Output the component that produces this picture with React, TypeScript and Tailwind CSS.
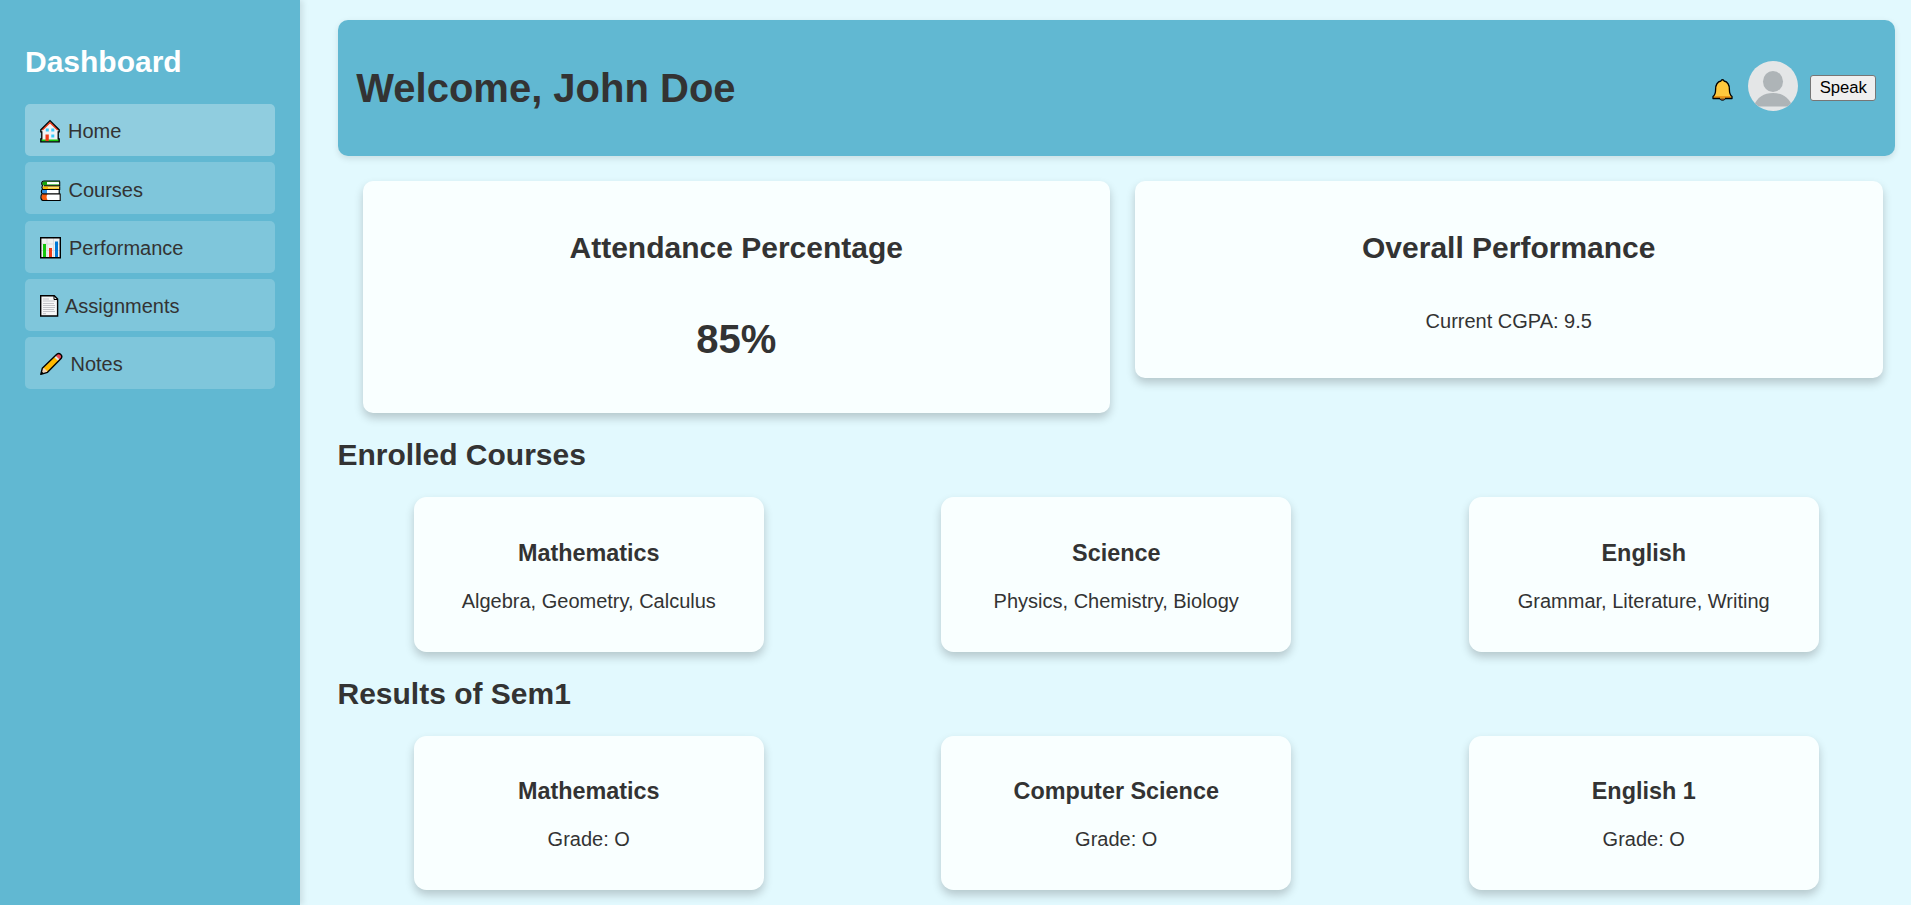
import type { ReactNode } from "react";

const HomeIcon = () => (
  <svg width="22" height="25" viewBox="0 0 22 25" className="mt-[2px] shrink-0">
    <path d="M2 11 10 3l8 8V22H2z" fill="#f2f2f4" />
    <path d="M1 20.500h18v2H1z" fill="#16c60c" />
    <path d="M2.200 11 10 3.500l7.800 7.500" fill="none" stroke="#f03a17" strokeWidth="1.600" />
    <path d="M5.500 15.500h3.300V22H5.500z" fill="#f03a17" />
    <path d="M5.800 9.500h3v3h-3zM11.300 9.500h3v3h-3zM11.300 15.500h3v3h-3z" fill="#3bcdfb" />
    <path d="M.8 22.800v-3h1v-7H.8v-2L10 1.600l9.200 9.200v2h-1v7h1v3z" fill="none" stroke="#000" strokeWidth="1.300" />
  </svg>
);

const BooksIcon = () => (
  <svg width="22" height="24" viewBox="0 0 22 24" className="mt-[5px] shrink-0">
    <path d="M3.500 2H20v5.500H3L1.500 6z" fill="#fff" />
    <path d="M3.500 2.200H19v1H7v2h12v1.300H3.500C1.700 6.500 1.700 3 3.500 2.200z" fill="#16a80c" />
    <path d="M7 3.200h11.500v2H7z" fill="#fff" />
    <path d="M3.500 7.300H20v3H3.500c-1.500-.5-1.500-2.500 0-3z" fill="#fcb900" />
    <path d="M8 8.300h11.500v1H8z" fill="#fff0b0" />
    <path d="M3 10.700h16V15H3L1.500 12z" fill="#fff" />
    <path d="M3 10.800h4v3.700H3c-1.600-.8-1.600-3 0-3.700z" fill="#2f8ee0" />
    <path d="M2.500 15H20.500v6H3L1 19z" fill="#fff" />
    <path d="M3 15h4.500c-1.200 2-1.200 4 0 6H3c-2.400-.5-2.400-5.500 0-6z" fill="#f75b0c" />
    <path d="M20 2H4C1.500 2 1 5 2.500 6.700 1.300 8 2 9.500 2.500 10.300 1 11.500 1 13.500 2.300 14.700.3 16 .3 21 3 21.500h17.200V15H3M4 6.700h15.700V2.500M3 10.500h16.700V7.500M3 14.800h16.200v-4" fill="none" stroke="#000" strokeWidth="1.100" />
  </svg>
);

const ChartIcon = () => (
  <svg width="22" height="24" viewBox="0 0 22 24" className="mt-[3px] shrink-0">
    <path d="M.7 1.700h19.600v20H.7z" fill="#f2f2f2" />
    <path d="M7 2v19M13.500 2v19M1 8h19M1 14.500h19" stroke="#dcdce0" strokeWidth="1" />
    <path d="M3 8h3v13.500H3z" fill="#16c60c" />
    <path d="M9 12h3v9.500H9z" fill="#f03a17" />
    <path d="M15 5.500h3v16h-3z" fill="#0078d7" />
    <path d="M.7 1.700h19.600v20H.7z" fill="none" stroke="#000" strokeWidth="1.400" />
  </svg>
);

const PageIcon = () => (
  <svg width="19" height="24" viewBox="0 0 19 24" className="mt-[2px] shrink-0">
    <path d="M.7 1.700h13.600l3.300 3.300v17H.7z" fill="#f7f7f7" stroke="#000" strokeWidth="1.400" />
    <path d="M14 2v3.500h3.500" fill="none" stroke="#000" strokeWidth="1" />
    <path d="M3 5h6M3 7h12M3 9.500h11M3 11.500h12M3 13.500h12M3 15.500h11M3 17.500h12M3 19.700h3" stroke="#c4c4c8" strokeWidth="1" />
  </svg>
);

const PencilIcon = () => (
  <svg width="24" height="24" viewBox="0 0 24 24" className="mt-[1px] shrink-0">
    <path d="m.8 22.300 1.500-6L16.800 2.200c2.800-2 6.200 1.200 4.500 4L7.500 20.300z" fill="#ffb900" />
    <path d="m.8 22.300 1.500-6 1.200-.7 4 4-.7 1z" fill="#f3d3b5" />
    <path d="m15.500 3.500 4.700 4.500-1.500 1.500L14 5z" fill="#e4e4e6" />
    <path d="m16.800 2.200c2.800-2 6.200 1.200 4.500 4l-1.300 1.500L15.700 3.400z" fill="#e74856" />
    <path d="m.8 22.300.6-3 3 2.500z" fill="#000" />
    <path d="m.8 22.300 1.500-6L16.800 2.200c2.800-2 6.200 1.200 4.500 4L7.500 20.300z" fill="none" stroke="#000" strokeWidth="1.400" strokeLinejoin="round" />
  </svg>
);

const BellIcon = () => (
  <svg width="22" height="24" viewBox="0 0 22 24" className="shrink-0">
    <path d="M7.500 20h6c-.3 3-5.700 3-6 0z" fill="#a4562a" stroke="#000" strokeWidth="1" />
    <path d="M1 20.500v-2c2-1.500 2.600-3 2.600-7C3.600 6.500 5.500 3.700 9 3c.3-1.700 2.700-1.700 3 0 3.500.7 5.400 3.500 5.400 8.500 0 4 .6 5.500 2.600 7v2z" fill="#ffc83d" />
    <path d="M1.800 18.200h17.400v1.700H1.800z" fill="#e88c10" />
    <path d="M8 20.500H1v-2c2-1.500 2.600-3 2.600-7C3.600 6.500 5.500 3.700 9 3c.3-1.700 2.700-1.700 3 0 3.500.7 5.400 3.500 5.400 8.500 0 4 .6 5.500 2.600 7v2h-7" fill="none" stroke="#000" strokeWidth="1.300" strokeLinejoin="round" />
  </svg>
);

const Avatar = () => (
  <svg width="50" height="50" viewBox="0 0 50 50" className="shrink-0 rounded-full">
    <path d="M0 0h50v50H0z" fill="#e4e6e7" />
    <ellipse cx="25" cy="20.500" rx="10" ry="10.600" fill="#aeb4b7" />
    <path d="M5.500 45.500C9 36 16 32 25 32s16 4 19.500 13.500z" fill="#aeb4b7" />
  </svg>
);

const navItems: { label: string; icon: ReactNode; spacing: string; active?: boolean }[] = [
  { label: "Home", icon: <HomeIcon />, spacing: "gap-[6px]", active: true },
  { label: "Courses", icon: <BooksIcon />, spacing: "gap-[6.5px]" },
  { label: "Performance", icon: <ChartIcon />, spacing: "gap-[7px]" },
  { label: "Assignments", icon: <PageIcon />, spacing: "gap-[6px]" },
  { label: "Notes", icon: <PencilIcon />, spacing: "gap-[6.5px]" },
];

const courses = [
  { title: "Mathematics", detail: "Algebra, Geometry, Calculus" },
  { title: "Science", detail: "Physics, Chemistry, Biology" },
  { title: "English", detail: "Grammar, Literature, Writing" },
];

const results = [
  { title: "Mathematics", detail: "Grade: O" },
  { title: "Computer Science", detail: "Grade: O" },
  { title: "English 1", detail: "Grade: O" },
];

function CardRow({ items, size }: { items: { title: string; detail: string }[]; size: string }) {
  return (
    <div className="grid grid-cols-3 justify-items-center gap-[25px]">
      {items.map((item) => (
        <div
          key={item.title}
          className={`w-[350px] rounded-[12.5px] bg-[#f9ffff] text-center shadow-[0_5px_10px_rgba(0,0,0,0.2)] ${size}`}
        >
          <h3 className="text-[23.4px] leading-[27px] font-bold">{item.title}</h3>
          <p className="mt-[23px] text-[20px] leading-[23px]">{item.detail}</p>
        </div>
      ))}
    </div>
  );
}

export default function App() {
  return (
    <div className="flex h-[905px] w-full overflow-hidden bg-[#e2f9fe] font-['Liberation_Sans',Arial,sans-serif] text-[#333]">
      <aside className="w-[300px] shrink-0 bg-[#61b8d2] px-[25px] pt-[44px] shadow-[2.5px_0_6px_rgba(0,0,0,0.1)]">
        <h2 className="text-[30px] leading-[35px] font-bold text-white">Dashboard</h2>
        <nav className="mt-[25px] flex flex-col gap-[6.25px]">
          {navItems.map((item) => (
            <a
              key={item.label}
              className={`flex h-[52px] items-center rounded-[5px] px-[15px] text-[20px] leading-[23px] ${item.spacing} ${
                item.active ? "bg-white/30" : "bg-[#f9ffff]/20"
              }`}
            >
              {item.icon}
              <span className={item.label === "Courses" ? "mt-[4px]" : "mt-[3px]"}>{item.label}</span>
            </a>
          ))}
        </nav>
      </aside>
      <main className="flex-1 pt-[20px] pr-[16px] pl-[37.5px]">
        <header className="flex h-[136px] items-center justify-between rounded-[10px] bg-[#61b8d2] px-[18.75px] shadow-[0_2.5px_6px_rgba(0,0,0,0.1)]">
          <h1 className="text-[40px] leading-[46px] font-bold">Welcome, John Doe</h1>
          <div className="flex items-center">
            <div className="mt-[3px] mr-[14px]">
              <BellIcon />
            </div>
            <div className="mr-[12px] -mt-[4px]">
              <Avatar />
            </div>
            <button className="h-[26px] w-[66px] rounded-[3px] border border-[#767676] bg-[#efefef] pb-[1px] text-[16.67px] leading-[19px] text-black">
              Speak
            </button>
          </div>
        </header>
        <div className="mt-[25px] flex items-start gap-[25px] pr-[12.5px] pl-[25px]">
          <section className="h-[232px] flex-1 rounded-[10px] bg-[#f9ffff] pt-[50px] text-center shadow-[0_5px_10px_rgba(0,0,0,0.2)]">
            <h2 className="text-[30px] leading-[34px] font-bold">Attendance Percentage</h2>
            <p className="mt-[51px] text-[40px] leading-[46px] font-bold">85%</p>
          </section>
          <section className="h-[197px] flex-1 rounded-[10px] bg-[#f9ffff] pt-[50px] text-center shadow-[0_5px_10px_rgba(0,0,0,0.2)]">
            <h2 className="text-[30px] leading-[34px] font-bold">Overall Performance</h2>
            <p className="mt-[45px] text-[20px] leading-[23px]">Current CGPA: 9.5</p>
          </section>
        </div>
        <h2 className="mt-[25px] mb-[25px] text-[30px] leading-[34px] font-bold">Enrolled Courses</h2>
        <CardRow items={courses} size="h-[155px] pt-[43px]" />
        <h2 className="mt-[25px] mb-[25px] text-[30px] leading-[34px] font-bold">Results of Sem1</h2>
        <CardRow items={results} size="h-[154px] pt-[42px]" />
      </main>
    </div>
  );
}
